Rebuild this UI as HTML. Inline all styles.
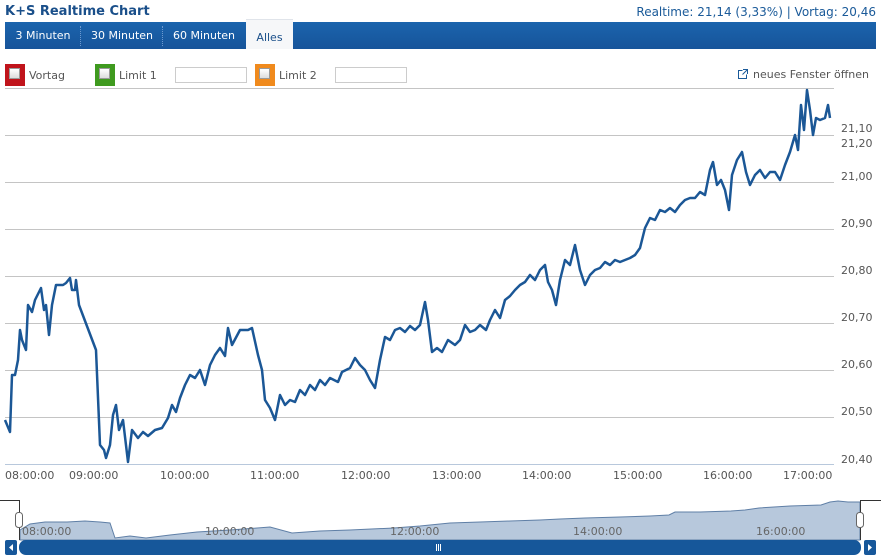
<!DOCTYPE html>
<html><head><meta charset="utf-8"><style>
*{margin:0;padding:0;box-sizing:border-box}
body{width:881px;height:560px;background:#fff;font-family:"DejaVu Sans","Liberation Sans",sans-serif;position:relative;overflow:hidden}
.abs{position:absolute}
.title{left:5px;top:4px;font:bold 13px "DejaVu Sans",sans-serif;color:#1a4f8a}
.rt{right:5px;top:5px;font-size:12px;color:#1a5a99}
.bar{left:5px;top:22px;width:871px;height:27px;background:linear-gradient(#1b64ad,#17549a)}
.tab{top:22px;height:27px;line-height:28px;font-size:11px;color:#fff;text-align:center}
.sep{top:26px;height:20px;border-left:1px dotted #6d9ad0}
.alles{left:246px;top:19px;width:47px;height:30px;background:#f6f7f9;color:#1a4f8a;line-height:36px;font-size:11px;text-align:center;border-top:1px solid #e0e4ea}
.cb{top:64px;width:20px;height:22px}
.cb i{position:absolute;left:4px;top:4px;width:11px;height:11px;background:linear-gradient(#fff,#ddd);border:1px solid #999}
.lbl{top:69px;font-size:11px;color:#555}
.inp{top:67px;width:72px;height:16px;border:1px solid #ccc;background:#fff}
.yl{font-size:11px;color:#555;left:841px}
.xl{font-size:11px;color:#555;top:469px}
</style></head><body>
<div class="abs title">K+S Realtime Chart</div>
<div class="abs rt">Realtime: 21,14 (3,33%) | Vortag: 20,46</div>
<div class="abs bar"></div>
<div class="abs tab" style="left:5px;width:76px">3 Minuten</div>
<div class="abs sep" style="left:80px"></div>
<div class="abs tab" style="left:81px;width:82px">30 Minuten</div>
<div class="abs sep" style="left:162px"></div>
<div class="abs tab" style="left:163px;width:82px">60 Minuten</div>
<div class="abs alles">Alles</div>
<div class="abs cb" style="left:5px;background:#c0141b"><i></i></div>
<div class="abs lbl" style="left:29px">Vortag</div>
<div class="abs cb" style="left:95px;background:#3f9a1f"><i></i></div>
<div class="abs lbl" style="left:119px">Limit 1</div>
<div class="abs inp" style="left:175px"></div>
<div class="abs cb" style="left:255px;background:#f08a1d"><i></i></div>
<div class="abs lbl" style="left:279px">Limit 2</div>
<div class="abs inp" style="left:335px"></div>
<svg class="abs" style="left:737px;top:68px" width="12" height="12"><path d="M5.5,2.5 H1.5 V10.5 H9.5 V6.5" fill="none" stroke="#1a5a99"/><path d="M6,1.5 H10.5 V6 M10.5,1.5 L5.5,6.5" fill="none" stroke="#1a5a99"/></svg>
<div class="abs" style="left:753px;top:68px;font-size:11px;color:#555">neues Fenster öffnen</div>
<svg class="abs" style="left:0;top:0" width="881" height="560">
<g stroke="#c4c4c4" stroke-width="1">
<line x1="5" x2="834" y1="88.5" y2="88.5"/><line x1="5" x2="834" y1="135.5" y2="135.5"/><line x1="5" x2="834" y1="182.5" y2="182.5"/><line x1="5" x2="834" y1="229.5" y2="229.5"/><line x1="5" x2="834" y1="276.5" y2="276.5"/><line x1="5" x2="834" y1="323.5" y2="323.5"/><line x1="5" x2="834" y1="370.5" y2="370.5"/><line x1="5" x2="834" y1="417.5" y2="417.5"/>
</g>
<line x1="5" x2="834" y1="464.5" y2="464.5" stroke="#b8c8dc"/>
<polyline fill="none" stroke="#1b5796" stroke-width="2.5" stroke-linejoin="round" points="5,420 10,432 12,375 15,375 18,360 20,330 22,340 26,350 28,305 32,312 35,300 41,288 44,310 46,305 49,335 52,305 56,285 63,285 66,283 70,278 72,290 75,290 76,280 79,305 96,350 100,445 104,450 106,458 110,445 113,415 116,405 119,430 123,420 128,462 132,430 138,438 143,432 148,436 155,430 162,428 168,418 172,405 176,412 180,398 185,385 190,375 195,378 200,370 205,385 210,365 215,355 220,348 225,356 228,328 232,345 240,330 248,330 252,328 258,355 262,370 265,400 270,408 275,420 280,395 285,405 290,400 295,402 300,390 305,395 310,385 315,390 320,380 325,385 330,378 338,382 342,372 350,368 355,358 360,365 365,370 370,380 375,388 380,360 385,337 390,340 395,330 400,328 405,332 410,326 415,330 420,325 425,302 428,320 432,352 437,348 442,352 448,340 455,345 460,340 465,325 470,332 475,330 480,325 486,330 490,320 495,310 500,318 505,300 510,296 515,290 520,285 525,282 530,275 535,280 540,270 545,265 548,282 552,290 556,305 560,280 565,260 570,265 575,245 580,270 585,285 590,275 595,270 600,268 605,262 610,265 615,260 620,262 625,260 630,258 635,255 640,248 645,228 650,218 655,220 660,210 665,212 670,208 675,212 680,205 685,200 690,198 695,198 700,192 705,195 710,170 713,162 717,185 721,180 725,190 729,210 732,175 737,160 742,152 746,172 750,185 755,175 760,170 765,178 770,172 775,172 780,180 785,165 790,152 795,135 798,150 801,105 804,130 807,90 810,110 813,135 816,118 820,120 825,118 828,105 830,118"/>
<path d="M20,540 L20,530 30,524 45,522 67,522 85,521 100,522 110,523 115,538 130,536 146,538 170,535 197,532 230,530 270,527 292,533 320,531 350,530 394,528 420,526 450,523 480,522 510,521 540,520 560,519 585,518 620,517 650,516 669,515 675,512 700,512 731,511 745,510 759,508 790,506 821,505 830,502 838,501 848,502 860,502 860,540 Z" fill="#b7c8dc" stroke="#5f7fa6" stroke-width="1"/>
<polyline points="0,500.5 19.5,500.5 19.5,540" fill="none" stroke="#333"/>
<polyline points="881,500.5 860.5,500.5 860.5,540" fill="none" stroke="#333"/>
<rect x="15.5" y="512.5" width="7" height="15" rx="3" fill="#fff" stroke="#666"/>
<rect x="856.5" y="512.5" width="7" height="15" rx="3" fill="#fff" stroke="#666"/>
<rect x="5" y="540" width="12" height="15" rx="2" fill="#16579a"/>
<rect x="864" y="540" width="12" height="15" rx="2" fill="#16579a"/>
<rect x="19" y="540" width="842" height="15" rx="7" fill="#16579a"/>
<path d="M13,544 L9,547.5 13,551Z M868,544 L872,547.5 868,551Z" fill="#fff"/>
<g stroke="#fff"><line x1="436.5" x2="436.5" y1="544" y2="551"/><line x1="438.5" x2="438.5" y1="544" y2="551"/><line x1="440.5" x2="440.5" y1="544" y2="551"/></g>
</svg>
<div class="abs yl" style="top:122px">21,10</div>
<div class="abs yl" style="top:137px">21,20</div>
<div class="abs yl" style="top:170px">21,00</div>
<div class="abs yl" style="top:217px">20,90</div>
<div class="abs yl" style="top:264px">20,80</div>
<div class="abs yl" style="top:311px">20,70</div>
<div class="abs yl" style="top:358px">20,60</div>
<div class="abs yl" style="top:405px">20,50</div>
<div class="abs yl" style="top:453px">20,40</div>
<div class="abs xl" style="left:5px">08:00:00</div>
<div class="abs xl" style="left:69px">09:00:00</div>
<div class="abs xl" style="left:160px">10:00:00</div>
<div class="abs xl" style="left:250px">11:00:00</div>
<div class="abs xl" style="left:341px">12:00:00</div>
<div class="abs xl" style="left:432px">13:00:00</div>
<div class="abs xl" style="left:522px">14:00:00</div>
<div class="abs xl" style="left:613px">15:00:00</div>
<div class="abs xl" style="left:703px">16:00:00</div>
<div class="abs xl" style="left:783px">17:00:00</div>
<div class="abs xl" style="left:22px;top:525px;color:#666">08:00:00</div>
<div class="abs xl" style="left:205px;top:525px;color:#666">10:00:00</div>
<div class="abs xl" style="left:390px;top:525px;color:#666">12:00:00</div>
<div class="abs xl" style="left:573px;top:525px;color:#666">14:00:00</div>
<div class="abs xl" style="left:756px;top:525px;color:#666">16:00:00</div>
</body></html>
